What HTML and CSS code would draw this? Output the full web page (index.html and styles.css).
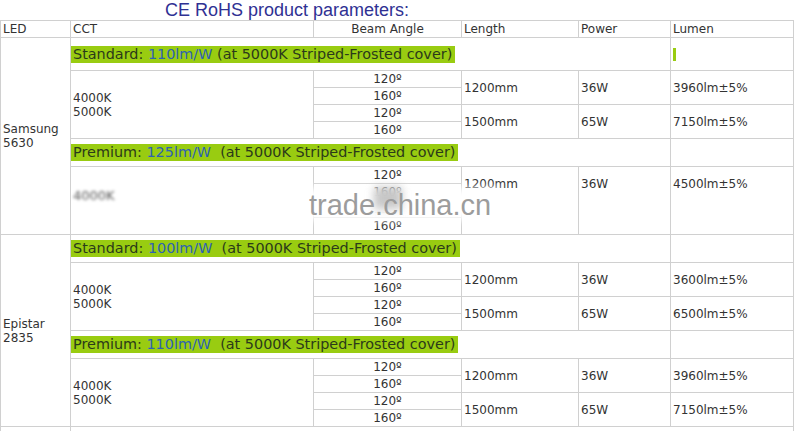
FILE: index.html
```html
<!DOCTYPE html>
<html>
<head>
<meta charset="utf-8">
<link rel="stylesheet" href="styles.css">
</head>
<body>
<h1 class="title">CE RoHS product parameters:</h1>
<div class="wrap">
<table class="spec">
<colgroup>
<col class="w-led"><col class="w-cct"><col class="w-beam"><col class="w-len"><col class="w-pow"><col class="w-lum">
</colgroup>
<tr class="head"><td>LED</td><td>CCT</td><td class="beam">Beam Angle</td><td>Length</td><td>Power</td><td>Lumen</td></tr>

<tr class="g-std"><td rowspan="10" class="led">Samsung<br>5630</td><td colspan="4" class="gcell"><span class="hl">Standard: <span class="eff">110lm/W</span> (at 5000K Striped-Frosted cover)</span></td><td class="gcell"><span class="hl mark"></span></td></tr>
<tr class="sub"><td rowspan="4" class="cct">4000K<br>5000K</td><td class="beam">120º</td><td rowspan="2">1200mm</td><td rowspan="2">36W</td><td rowspan="2">3960lm±5%</td></tr>
<tr class="sub"><td class="beam">160º</td></tr>
<tr class="sub"><td class="beam">120º</td><td rowspan="2">1500mm</td><td rowspan="2">65W</td><td rowspan="2">7150lm±5%</td></tr>
<tr class="sub"><td class="beam">160º</td></tr>
<tr class="g-prem"><td colspan="4" class="gcell"><span class="hl">Premium: <span class="eff">125lm/W</span>&nbsp; (at 5000K Striped-Frosted cover)</span></td><td></td></tr>
<tr class="sub"><td rowspan="4" class="cct smudge-cell"><span class="smudge">4000K</span></td><td class="beam">120º</td><td rowspan="4" class="high">1200mm</td><td rowspan="4" class="high">36W</td><td rowspan="4" class="high">4500lm±5%</td></tr>
<tr class="sub"><td class="beam">160º</td></tr>
<tr class="sub"><td class="beam">120º</td></tr>
<tr class="sub"><td class="beam">160º</td></tr>

<tr class="g-prem"><td rowspan="10" class="led">Epistar<br>2835</td><td colspan="4" class="gcell"><span class="hl">Standard: <span class="eff">100lm/W</span>&nbsp; (at 5000K Striped-Frosted cover)</span></td><td></td></tr>
<tr class="sub"><td rowspan="4" class="cct">4000K<br>5000K</td><td class="beam">120º</td><td rowspan="2">1200mm</td><td rowspan="2">36W</td><td rowspan="2">3600lm±5%</td></tr>
<tr class="sub"><td class="beam">160º</td></tr>
<tr class="sub"><td class="beam">120º</td><td rowspan="2">1500mm</td><td rowspan="2">65W</td><td rowspan="2">6500lm±5%</td></tr>
<tr class="sub"><td class="beam">160º</td></tr>
<tr class="g-prem"><td colspan="4" class="gcell"><span class="hl">Premium: <span class="eff">110lm/W</span>&nbsp; (at 5000K Striped-Frosted cover)</span></td><td></td></tr>
<tr class="sub"><td rowspan="4" class="cct">4000K<br>5000K</td><td class="beam">120º</td><td rowspan="2">1200mm</td><td rowspan="2">36W</td><td rowspan="2">3960lm±5%</td></tr>
<tr class="sub"><td class="beam">160º</td></tr>
<tr class="sub"><td class="beam">120º</td><td rowspan="2">1500mm</td><td rowspan="2">65W</td><td rowspan="2">7150lm±5%</td></tr>
<tr class="sub"><td class="beam">160º</td></tr>

<tr class="tail"><td></td><td colspan="5"></td></tr>
</table>
<div class="glow"></div>
<div class="blot"></div>
<div class="watermark">trade.china.cn</div>
</div>
</body>
</html>
```
FILE: styles.css
```css
html, body {
  margin: 0;
  padding: 0;
  background: #fff;
  overflow: hidden;
}
body {
  font-family: "DejaVu Sans", Verdana, sans-serif;
  color: #333;
}
.title {
  margin: 0;
  height: 20px;
  padding-left: 165px;
  font: normal 18px/20px "Liberation Sans", Arial, sans-serif;
  color: #2f3193;
}
.wrap {
  position: relative;
}
.spec {
  border-collapse: collapse;
  table-layout: fixed;
  width: 794px;
}
.w-led { width: 70px; }
.w-cct { width: 243px; }
.w-beam { width: 148px; }
.w-len { width: 117px; }
.w-pow { width: 92px; }
.w-lum { width: 123px; }
.spec td {
  border: 1px solid #d0d0d0;
  padding: 0 2px;
  font-size: 12px;
  line-height: 14px;
  vertical-align: middle;
  white-space: nowrap;
  overflow: hidden;
}
.head td { height: 16px; }
.g-std td { height: 32px; }
.g-prem td { height: 27px; }
.sub td { height: 16px; }
.tail td { height: 20px; }
.spec td.beam { text-align: center; }
.spec td.gcell { padding: 0; }
.spec td.high { vertical-align: top; padding-top: 10px; }
.spec td.smudge-cell { vertical-align: top; padding-top: 22px; }
.hl {
  display: inline-block;
  background: #99cc11;
  font-size: 14.4px;
  line-height: 17px;
  padding: 0 3px 0 2px;
  color: #2b3a1a;
}
.hl.mark {
  width: 3px;
  height: 13px;
  padding: 0;
  margin-left: 2px;
  vertical-align: middle;
}
.eff { color: #2d62b4; }
.smudge {
  display: inline-block;
  font-size: 13px;
  color: #555;
  filter: blur(1.4px);
}
.glow {
  position: absolute;
  left: 305px;
  top: 168px;
  width: 195px;
  height: 32px;
  background: #fff;
  filter: blur(4px);
}
.blot {
  position: absolute;
  left: 374px;
  top: 167px;
  width: 28px;
  height: 22px;
  background: #b0b0b0;
  filter: blur(4px);
  opacity: 0.7;
}
.watermark {
  position: absolute;
  left: 309px;
  top: 169px;
  font: 29px/32px "Liberation Sans", Arial, sans-serif;
  color: #9c9c9c;
}
```
